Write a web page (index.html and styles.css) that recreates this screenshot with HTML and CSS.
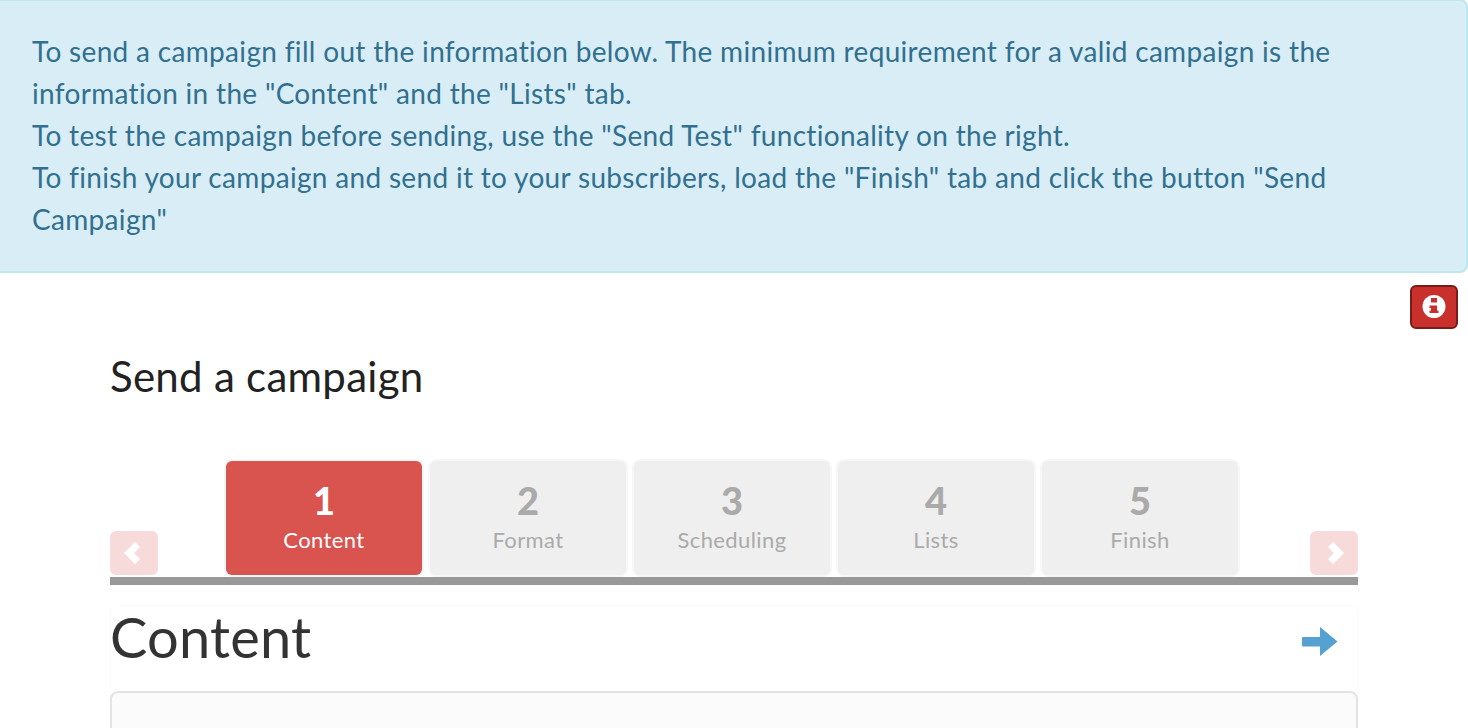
FILE: index.html
```html
<!DOCTYPE html>
<html lang="en">
<head>
  <meta charset="UTF-8">
  <title>Send a campaign</title>
  <link rel="stylesheet" href="styles.css">
</head>
<body>
  <div class="alert">
    To send a campaign fill out the information below. The minimum requirement for a valid campaign is the information in the "Content" and the "Lists" tab.<br>
    To test the campaign before sending, use the "Send Test" functionality on the right.<br>
    To finish your campaign and send it to your subscribers, load the "Finish" tab and click the button "Send Campaign"
  </div>

  <div class="help-row">
    <button class="help-btn" type="button" aria-label="Help">
      <svg width="24" height="24" viewBox="0 0 24 24">
        <circle cx="12" cy="11.500" r="11.500" fill="#fff"/>
        <path d="M9 3h6v4.500H9zM7.500 10.500H15v5h1.500V18h-9v-2.500H9v-2.500H7.500z" fill="#c9302c"/>
      </svg>
    </button>
  </div>

  <div class="page">
    <h1 class="page-title">Send a campaign</h1>

    <div class="wizard">
      <button class="nav-btn prev" type="button" aria-label="Previous">
        <svg width="16" height="22" viewBox="0 0 16 22"><path d="M0 11 11 0l5 5-6 6 6 6-5 5z" fill="#fff"/></svg>
      </button>
      <div class="tabs">
        <div class="tab active"><span class="num">1</span><span class="name">Content</span></div>
        <div class="tab"><span class="num">2</span><span class="name">Format</span></div>
        <div class="tab"><span class="num">3</span><span class="name">Scheduling</span></div>
        <div class="tab"><span class="num">4</span><span class="name">Lists</span></div>
        <div class="tab"><span class="num">5</span><span class="name">Finish</span></div>
      </div>
      <button class="nav-btn next" type="button" aria-label="Next">
        <svg width="16" height="22" viewBox="0 0 16 22"><path d="M16 11 5 0 0 5l6 6-6 6 5 5z" fill="#fff"/></svg>
      </button>
    </div>

    <div class="panel">
      <div class="panel-head">
        <h2>Content</h2>
        <svg class="arrow" width="36" height="30" viewBox="0 0 36 30"><path d="M1 10h17V0l17.500 14.500L18 29v-9.500H1a1 1 0 0 1-1-1V11a1 1 0 0 1 1-1z" fill="#55a2d2"/></svg>
      </div>
      <div class="panel-body"></div>
    </div>
  </div>
</body>
</html>
```

FILE: styles.css
```css
html, body {
  height: 728px;
  overflow: hidden;
}
body {
  margin: 0;
  background: #fff;
  font-family: "Lato", "Noto Sans", sans-serif;
  color: #333;
}
/* left edge of the box sits just outside the window */
.alert {
  box-sizing: border-box;
  height: 274px;
  margin: -1px 0 0 -8px;
  padding: 29px 32px 0 38px;
  background: #d9edf7;
  border: 2px solid #bce8f1;
  border-radius: 8px;
  color: #31708f;
  font-size: 28px;
  line-height: 42px;
  letter-spacing: 0.32px;
}
.help-row {
  display: flex;
  justify-content: flex-end;
  padding: 12px 10px 0 0;
}
.help-btn {
  display: flex;
  align-items: center;
  justify-content: center;
  width: 48px;
  height: 44px;
  padding: 0;
  background: #c9302c;
  border: 2px solid #761c19;
  border-radius: 6px;
}
.page {
  padding: 0 110px;
}
.page-title {
  margin: 22px 0 0;
  font-size: 42px;
  font-weight: 400;
  line-height: 50px;
  letter-spacing: 0.27px;
  color: #222;
}
.wizard {
  display: flex;
  align-items: flex-end;
  justify-content: space-between;
  margin-top: 60px;
  padding-bottom: 2px;
  border-bottom: 8px solid #999;
}
.nav-btn {
  display: flex;
  align-items: center;
  justify-content: center;
  width: 48px;
  height: 44px;
  padding: 0;
  background: #f7dbdb;
  border: none;
  border-radius: 6px;
}
.prev {
  padding-right: 4px;
}
.next {
  padding-left: 3px;
}
.tabs {
  display: flex;
  gap: 8px;
  margin-right: 4px;
}
.tab {
  display: flex;
  flex-direction: column;
  align-items: center;
  box-sizing: border-box;
  width: 196px;
  height: 114px;
  padding-top: 17px;
  background: #efefef;
  border-radius: 6px;
  box-shadow: 0 0 0 2px #f7f7f7;
  color: #aaa;
}
.tab.active {
  background: #d9534f;
  color: #fff;
}
.num {
  font-size: 38px;
  font-weight: 900;
  line-height: 44px;
}
.name {
  margin-top: 2px;
  font-size: 22px;
  line-height: 32px;
  letter-spacing: 0.4px;
}
.panel {
  box-sizing: border-box;
  height: 140px;
  margin-top: 20px;
  border: 1px solid #fbfbfb;
  border-radius: 6px;
}
.panel-head {
  display: flex;
  align-items: flex-start;
  justify-content: space-between;
  height: 85px;
  padding-right: 19px;
}
.panel-head h2 {
  margin: 0 0 0 -1px;
  font-size: 56px;
  font-weight: 400;
  line-height: 62px;
  letter-spacing: 0.2px;
}
.arrow {
  margin-top: 21px;
}
.panel-body {
  height: 60px;
  margin: 0 -1px;
  background: #fbfbfb;
  border: 2px solid #e3e3e3;
  border-radius: 8px;
}
```
